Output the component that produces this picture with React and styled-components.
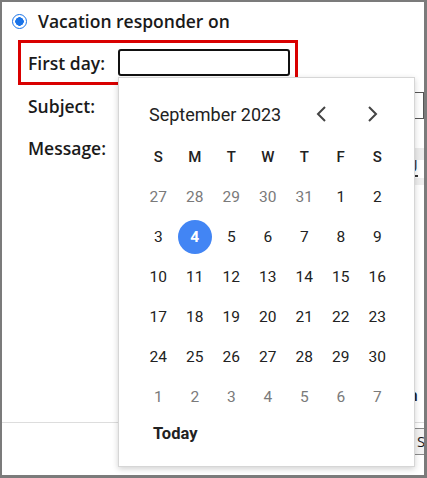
import styled, { createGlobalStyle } from "styled-components"

const Global = createGlobalStyle`
    body{
        margin: 0;
        background: #ffffff;
        font-family: 'Open Sans', 'Liberation Sans', sans-serif;
    }
`

const weeks = [
    [[27, true], [28, true], [29, true], [30, true], [31, true], [1], [2]],
    [[3], [4], [5], [6], [7], [8], [9]],
    [[10], [11], [12], [13], [14], [15], [16]],
    [[17], [18], [19], [20], [21], [22], [23]],
    [[24], [25], [26], [27], [28], [29], [30]],
    [[1, true], [2, true], [3, true], [4, true], [5, true], [6, true], [7, true]],
]

const weekDays = ["S", "M", "T", "W", "T", "F", "S"]

function Chevron({ flip }) {
    return (
        <svg width="14" height="20" viewBox="0 0 14 20">
            <path
                d={flip ? "M4 3 L11 10 L4 17" : "M10 3 L3 10 L10 17"}
                fill="none"
                stroke="#444"
                strokeWidth="2"
            />
        </svg>
    )
}

function DatePicker() {
    return (
        <Popup>
            <Header>
                <Month>September 2023</Month>
                <NavButton><Chevron /></NavButton>
                <NavButton><Chevron flip /></NavButton>
            </Header>
            <Grid>
                {weekDays.map((d, i) => <HeadCell key={i}>{d}</HeadCell>)}
                {weeks.map((week, w) =>
                    week.map(([day, other], i) => (
                        <DayCell key={w + "-" + i} $other={other}>
                            {day === 4 && !other ? <Selected>4</Selected> : day}
                        </DayCell>
                    ))
                )}
            </Grid>
            <TodayButton>Today</TodayButton>
        </Popup>
    )
}

export default function App() {
    return (
        <>
            <Global />
            <Frame>
                <RadioRow>
                    <Radio />
                    <span>Vacation responder on</span>
                </RadioRow>
                <Highlight>
                    <Label>First day:</Label>
                    <DateInput />
                </Highlight>
                <FieldRow>
                    <Label>Subject:</Label>
                    <SubjectInput />
                </FieldRow>
                <MessageRow>
                    <Label>Message:</Label>
                    <Editor>
                        <Toolbar>
                            <ToolItem $underline>U</ToolItem>
                        </Toolbar>
                        <EditorBody>n</EditorBody>
                    </Editor>
                </MessageRow>
                <Footer>
                    <SaveButton>Sa</SaveButton>
                </Footer>
                <DatePicker />
            </Frame>
        </>
    )
}

const Frame = styled.div`
    width: 427px;
    height: 478px;
    box-sizing: border-box;
    border: 2px solid #7b7b7b;
    border-right-width: 3px;
    border-bottom-width: 3px;
    position: relative;
    overflow: hidden;
    background: #ffffff;
    color: #1a1a1a;
`

const RadioRow = styled.div`
    display: flex;
    align-items: center;
    gap: 11px;
    height: 30px;
    margin-top: 4px;
    padding-left: 10px;
    font-size: 17.5px;
    font-weight: 600;
`

const Radio = styled.span`
    width: 15px;
    height: 15px;
    box-sizing: border-box;
    border-radius: 50%;
    border: 1.5px solid #1a73e8;
    background: radial-gradient(circle, #1a73e8 0 4px, #ffffff 4.5px);
`

const Highlight = styled.div`
    display: flex;
    align-items: center;
    width: 280px;
    height: 45px;
    box-sizing: border-box;
    margin: 4px 0 0 16px;
    padding-left: 7px;
    border: 3px solid #d90000;
`

const Label = styled.span`
    width: 90px;
    flex-shrink: 0;
    font-size: 17.5px;
    font-weight: 600;
    line-height: 30px;
`

const DateInput = styled.div`
    width: 172px;
    height: 27px;
    box-sizing: border-box;
    border: 2px solid #111111;
    border-radius: 3px;
`

const FieldRow = styled.div`
    display: flex;
    align-items: center;
    margin-top: 7px;
    padding-left: 26px;
    height: 27px;
`

const SubjectInput = styled.div`
    width: 330px;
    height: 27px;
    box-sizing: border-box;
    border: 1px solid #555555;
`

const MessageRow = styled.div`
    display: flex;
    align-items: flex-start;
    margin-top: 14px;
    padding-left: 26px;
`

const Editor = styled.div`
    width: 322px;
    height: 283px;
    display: flex;
    flex-direction: column;
`

const Toolbar = styled.div`
    height: 52px;
    box-sizing: border-box;
    display: flex;
    align-items: flex-end;
    justify-content: flex-end;
    padding: 0 6px 8px 0;
    background: linear-gradient(#ffffff 0 15px, #ececec 15px 27px, #ffffff 27px 45px, #eeeeee 45px);
`

const ToolItem = styled.span`
    font-size: 17px;
    line-height: 18px;
    color: #333333;
    border-bottom: ${p => p.$underline ? "2px solid #333333" : "none"};
`

const EditorBody = styled.div`
    flex: 1;
    display: flex;
    align-items: flex-end;
    justify-content: flex-end;
    padding: 0 6px 10px 0;
    font-size: 17px;
    font-weight: 600;
    color: #222222;
`

const Footer = styled.div`
    margin-top: 6px;
    border-top: 1px solid #dddddd;
    padding: 5px 0 0 412px;
`

const SaveButton = styled.div`
    width: 30px;
    height: 27px;
    box-sizing: border-box;
    border: 1px solid #8a8a8a;
    border-right: none;
    background: #f2f2f2;
    padding: 2px 2px;
    font-size: 15px;
    white-space: nowrap;
`

const Popup = styled.div`
    position: absolute;
    left: 116px;
    top: 75px;
    width: 297px;
    height: 390px;
    box-sizing: border-box;
    background: #ffffff;
    border: 1px solid #d6d6d6;
    box-shadow: 0 2px 6px rgba(0, 0, 0, 0.18);
    display: flex;
    flex-direction: column;
    font-family: 'Roboto', 'Liberation Sans', sans-serif;
`

const Header = styled.div`
    display: flex;
    align-items: center;
    height: 40px;
    margin-top: 16px;
    padding-left: 30px;
`

const Month = styled.span`
    font-size: 18px;
    color: #222222;
    width: 148px;
`

const NavButton = styled.span`
    width: 50px;
    display: flex;
    justify-content: center;
`

const Grid = styled.div`
    display: grid;
    grid-template-columns: repeat(7, 36.5px);
    grid-auto-rows: 40px;
    padding-left: 21px;
    margin-top: 3px;
`

const HeadCell = styled.span`
    display: flex;
    align-items: center;
    justify-content: center;
    font-size: 15px;
    font-weight: 500;
    color: #222222;
`

const DayCell = styled.span`
    display: flex;
    align-items: center;
    justify-content: center;
    font-size: 15.5px;
    color: ${p => p.$other ? "#7a7a7a" : "#222222"};
`

const Selected = styled.span`
    width: 34px;
    height: 34px;
    border-radius: 50%;
    background: #4285f4;
    color: #ffffff;
    font-weight: 700;
    display: flex;
    align-items: center;
    justify-content: center;
`

const TodayButton = styled.span`
    margin: 7px 0 0 34px;
    font-size: 16.5px;
    font-weight: 700;
    color: #222222;
`
